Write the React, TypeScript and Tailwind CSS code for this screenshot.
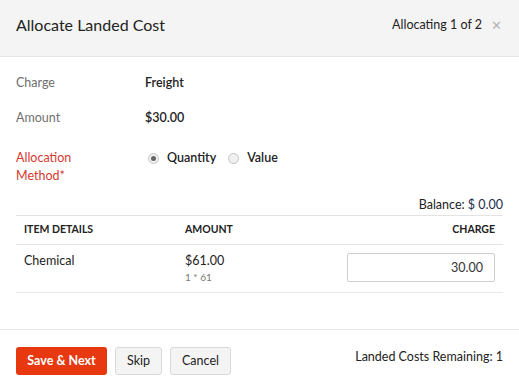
import { useState } from 'react';

const font = { fontFamily: 'Lato, "Open Sans", sans-serif' };

export default function App() {
  const [method, setMethod] = useState<'quantity' | 'value'>('quantity');
  const [charge, setCharge] = useState('30.00');

  return (
    <div className="w-[519px] h-[392px] bg-white text-[#222] flex flex-col overflow-hidden" style={font}>
      {/* Header */}
      <div className="h-[57px] shrink-0 bg-[#f4f4f4] border-b border-[#e6e6e6] flex items-start justify-between pl-4 pr-[17px] pt-[14px]">
        <h1 className="text-[16px] leading-[22px] text-[#222]">Allocate Landed Cost</h1>
        <div className="flex items-center gap-[9px] pt-[3px]">
          <span className="text-[12.5px] leading-[16px] text-[#222]">Allocating 1 of 2</span>
          <span className="text-[13px] leading-[16px] text-[#b5b5b5]">✕</span>
        </div>
      </div>

      {/* Body */}
      <div className="flex-1 px-4 pt-[17px] text-[12.5px]">
        <div className="flex items-center h-[18px]">
          <span className="w-[129px] text-[#6f6f6f]">Charge</span>
          <span className="font-semibold text-[#222]">Freight</span>
        </div>
        <div className="flex items-center h-[18px] mt-[17px]">
          <span className="w-[129px] text-[#6f6f6f]">Amount</span>
          <span className="font-semibold text-[#222]">$30.00</span>
        </div>
        <div className="flex mt-[22px]">
          <span className="w-[132px] text-[#d6392f] leading-[18px]">
            Allocation
            <br />
            Method*
          </span>
          <div className="flex items-start gap-[12px]">
            <label className="flex items-center gap-[8px] cursor-pointer" onClick={() => setMethod('quantity')}>
              <Radio checked={method === 'quantity'} />
              <span className="font-semibold text-[#222] leading-[18px]">Quantity</span>
            </label>
            <label className="flex items-center gap-[8px] cursor-pointer" onClick={() => setMethod('value')}>
              <Radio checked={method === 'value'} />
              <span className="font-semibold text-[#222] leading-[18px]">Value</span>
            </label>
          </div>
        </div>

        <div className="text-right mt-[12px] leading-[16px] text-[#222]">
          Balance: <span className="text-[#1c2b4a]">$ 0.00</span>
        </div>

        {/* Table */}
        <div className="mt-[2px] border-t border-[#e3e3e3]">
          <div className="flex items-center h-[29px] px-2 text-[10.5px] font-bold text-[#222] border-b border-[#e3e3e3]">
            <span className="w-[161px]">ITEM DETAILS</span>
            <span className="flex-1">AMOUNT</span>
            <span>CHARGE</span>
          </div>
          <div className="flex px-2 pt-[6px] pb-[9px] border-b border-[#e8e8e8]">
            <span className="w-[161px] pt-[1px] leading-[17px]">Chemical</span>
            <div className="flex-1 flex flex-col pt-[1px]">
              <span className="leading-[17px]">$61.00</span>
              <span className="text-[10px] text-[#777] mt-[2px] leading-[12px]">1 * 61</span>
            </div>
            <input
              value={charge}
              onChange={(e) => setCharge(e.target.value)}
              className="w-[148px] h-[29px] mt-[2px] border border-[#cfcfcf] rounded-[2px] text-right px-[11px] text-[12.5px] text-[#333] outline-none"
              style={font}
            />
          </div>
        </div>
      </div>

      {/* Footer */}
      <div className="h-[63px] shrink-0 border-t border-[#e6e6e6] flex items-start justify-between px-4 pt-[17px] text-[12.5px]">
        <div className="flex gap-2">
          <button className="h-[28px] w-[91px] rounded-[3px] bg-[#e7380f] text-white font-bold">Save &amp; Next</button>
          <button className="h-[28px] w-[47px] rounded-[3px] bg-[#f4f4f4] border border-[#d9d9d9] text-[#222]">Skip</button>
          <button className="h-[28px] w-[61px] rounded-[3px] bg-[#f4f4f4] border border-[#d9d9d9] text-[#222]">Cancel</button>
        </div>
        <span className="pt-[1px] text-[#222]">Landed Costs Remaining: 1</span>
      </div>
    </div>
  );
}

function Radio({ checked }: { checked: boolean }) {
  return (
    <span className="w-[11px] h-[11px] rounded-full border border-[#c4c4c4] bg-[#f0f0f0] flex items-center justify-center">
      {checked && <span className="w-[5px] h-[5px] rounded-full bg-[#666]" />}
    </span>
  );
}
